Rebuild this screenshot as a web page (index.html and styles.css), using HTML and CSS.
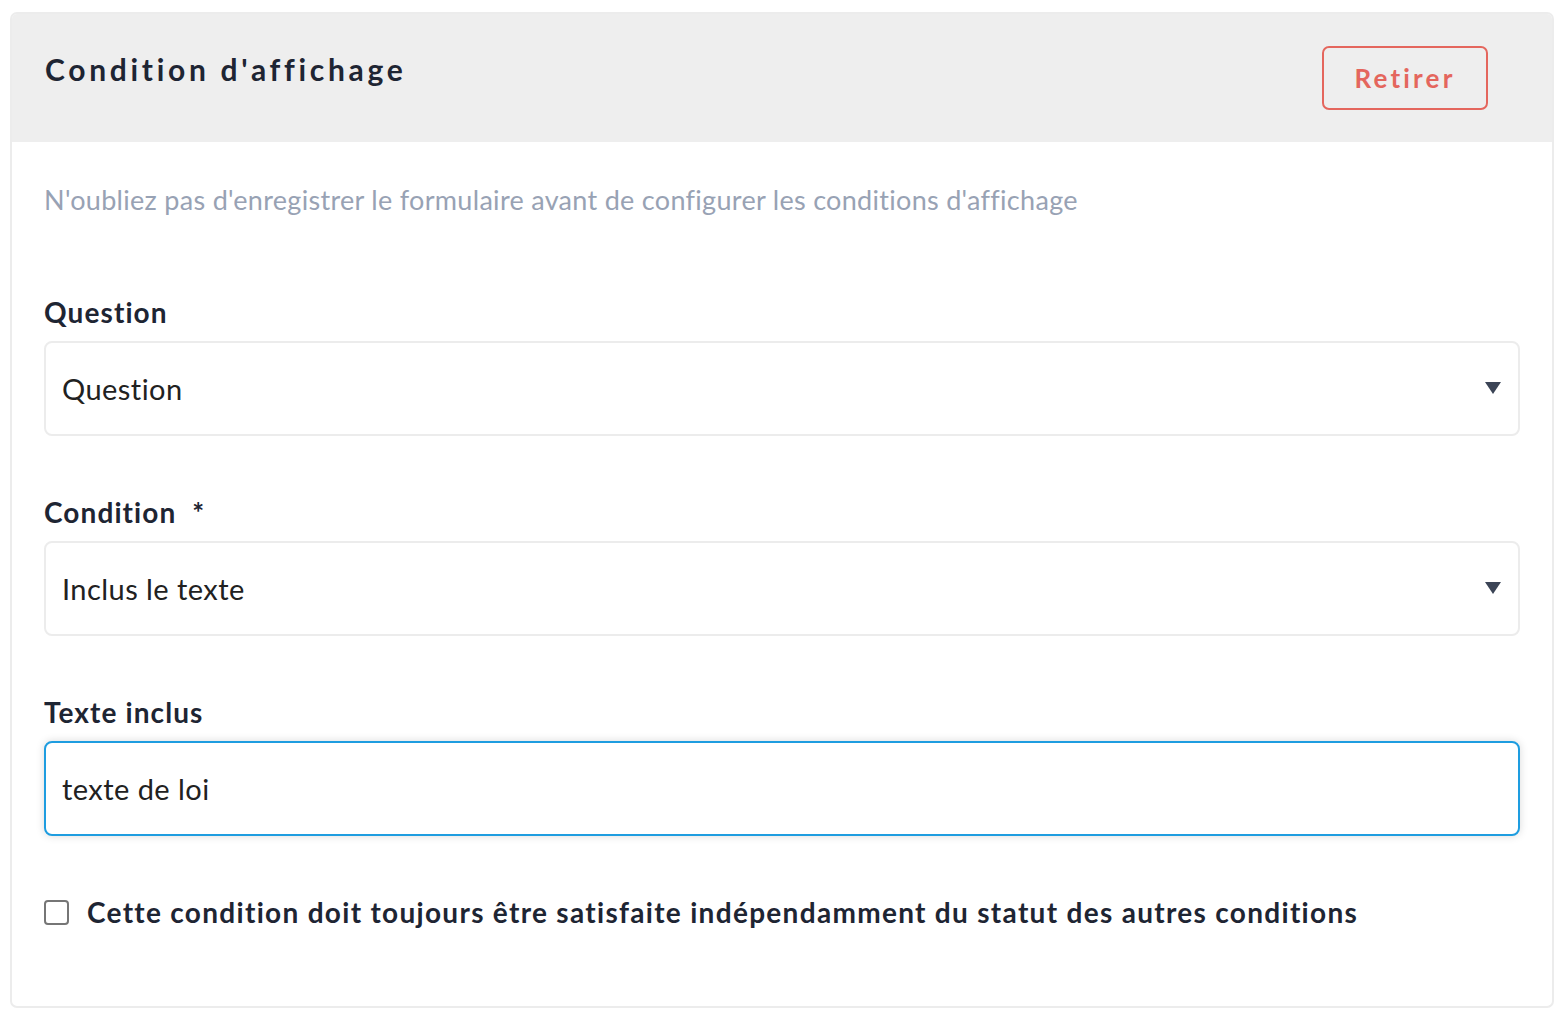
FILE: index.html
```html
<!DOCTYPE html>
<html lang="fr">
<head>
  <meta charset="UTF-8" />
  <meta name="viewport" content="width=device-width, initial-scale=1" />
  <title>Condition d'affichage</title>
  <link rel="stylesheet" href="styles.css">
</head>
<body>
  <div class="card">
    <div class="card-header">
      <h2 class="card-title">Condition d'affichage</h2>
      <button type="button" class="btn-remove">Retirer</button>
    </div>

    <div class="card-body">
      <p class="help">N'oubliez pas d'enregistrer le formulaire avant de configurer les conditions d'affichage</p>

      <div class="field">
        <label for="question">Question</label>
        <div class="select-wrap">
          <select id="question">
            <option>Question</option>
          </select>
          <span class="caret"></span>
        </div>
      </div>

      <div class="field">
        <label for="condition">Condition <span class="req">*</span></label>
        <div class="select-wrap">
          <select id="condition">
            <option>Inclus le texte</option>
          </select>
          <span class="caret"></span>
        </div>
      </div>

      <div class="field">
        <label for="texte">Texte inclus</label>
        <input type="text" id="texte" class="text-input focused" value="texte de loi" />
      </div>

      <label class="check">
        <input type="checkbox" />
        <span class="box"></span>
        <span>Cette condition doit toujours être satisfaite indépendamment du statut des autres conditions</span>
      </label>
    </div>
  </div>
</body>
</html>
```

FILE: styles.css
```css
* {
  box-sizing: border-box;
}
html, body {
  margin: 0;
  background: #fff;
  font-family: Lato, 'Noto Sans', sans-serif;
  color: #1e2533;
}
body {
  padding: 12px 14px 12px 10px;
}

.card {
  border: 2px solid #ececec;
  border-radius: 7px;
  overflow: hidden;
  background: #fff;
}

.card-header {
  height: 128px;
  background: #eeeeee;
  display: flex;
  align-items: flex-start;
  justify-content: space-between;
  padding: 37px 64px 0 33px;
}
.card-title {
  margin: 0;
  font-size: 30px;
  line-height: 36px;
  font-weight: 700;
  letter-spacing: 3.7px;
  color: #1e2533;
}
.btn-remove {
  margin-top: -5px;
  width: 166px;
  height: 64px;
  background: transparent;
  border: 2px solid #e4665d;
  border-radius: 7px;
  color: #e4665d;
  font-family: inherit;
  font-size: 26px;
  font-weight: 700;
  letter-spacing: 3.2px;
  cursor: pointer;
}

.card-body {
  padding: 41px 32px 77px 32px;
}
.help {
  margin: 0 0 78px;
  font-size: 27px;
  line-height: 34px;
  letter-spacing: 0.3px;
  color: #98a2b4;
}

.field {
  margin-bottom: 59px;
}
.field label {
  display: block;
  font-size: 28px;
  line-height: 34px;
  font-weight: 700;
  letter-spacing: 1.1px;
  margin-bottom: 12px;
}
.req {
  margin-left: 8px;
}

.select-wrap {
  position: relative;
}
select, .text-input {
  display: block;
  width: 100%;
  height: 95px;
  padding: 0 16px;
  border: 2px solid #ececec;
  border-radius: 8px;
  background: #fff;
  font-family: inherit;
  font-size: 29px;
  letter-spacing: 0.45px;
  color: #212121;
  appearance: none;
  -webkit-appearance: none;
  outline: none;
}
.caret {
  position: absolute;
  right: 19px;
  top: 41px;
  width: 0;
  height: 0;
  border-left: 8px solid transparent;
  border-right: 8px solid transparent;
  border-top: 12px solid #3b4456;
  pointer-events: none;
}
.text-input.focused {
  border-color: #1e9de0;
  box-shadow: 0 0 8px rgba(0, 0, 0, 0.15);
}

.check {
  display: flex;
  align-items: center;
  gap: 18px;
  font-size: 28px;
  line-height: 34px;
  font-weight: 700;
  letter-spacing: 1.3px;
  margin-top: 56px;
}
.check input {
  display: none;
}
.check .box {
  width: 25px;
  height: 25px;
  border: 2px solid #767676;
  border-radius: 4px;
  flex: none;
}
```
